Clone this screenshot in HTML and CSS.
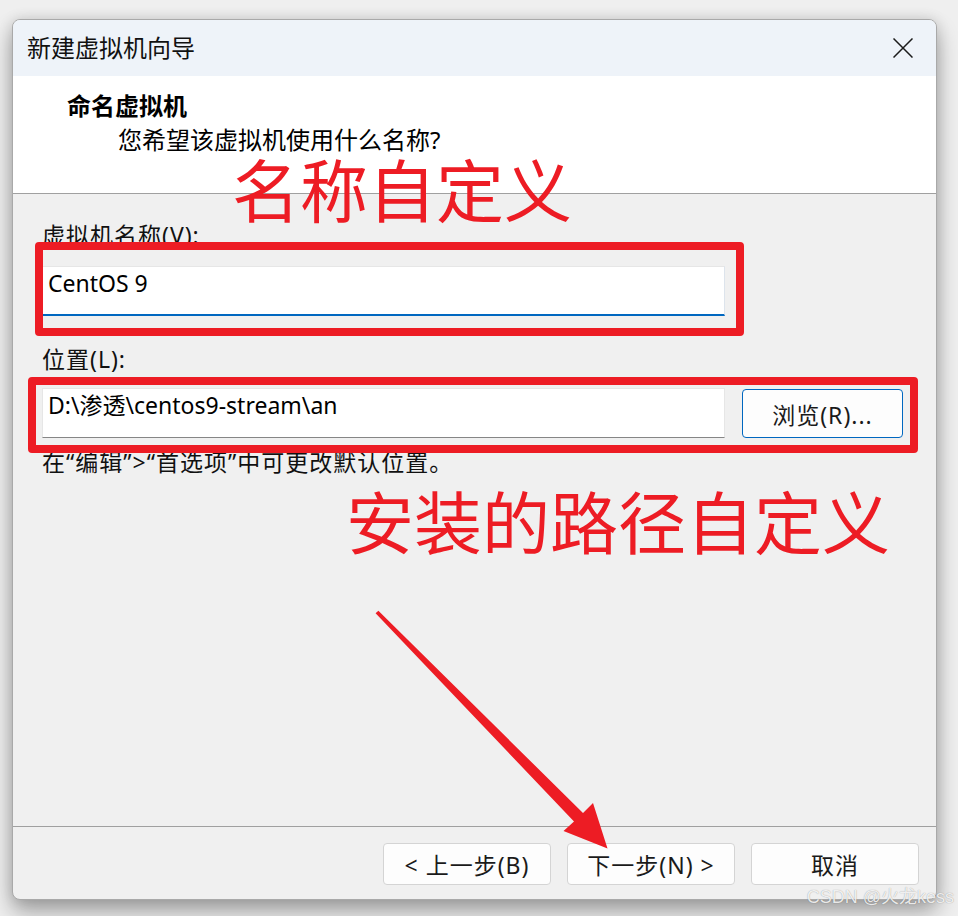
FILE: index.html
```html
<!DOCTYPE html>
<html lang="zh-CN">
<head>
    <meta charset="UTF-8">
    <meta name="viewport" content="width=device-width, initial-scale=1.0">
    <title>新建虚拟机向导</title>
    <link rel="stylesheet" href="styles.css">
</head>
<body>
    <div class="window">
        <div class="titlebar">
            <span class="title">新建虚拟机向导</span>
            <span class="close">
                <svg width="20" height="20" viewBox="0 0 20 20">
                    <path d="M0.5 0.5 L19.5 19.5 M19.5 0.5 L0.5 19.5" stroke="#1b1b1b" stroke-width="1.5" fill="none"/>
                </svg>
            </span>
        </div>

        <div class="header">
            <div class="header-title">命名虚拟机</div>
            <div class="header-sub">您希望该虚拟机使用什么名称?</div>
        </div>

        <div class="content">
            <div class="field-label">虚拟机名称(V):</div>
            <div class="text-input focused">CentOS 9</div>

            <div class="field-label loc-label">位置(L):</div>
            <div class="loc-row">
                <div class="text-input">D:\渗透\centos9-stream\an</div>
                <button class="btn browse-btn">浏览(R)...</button>
            </div>
            <div class="hint">在“编辑”&gt;“首选项”中可更改默认位置。</div>
        </div>

        <div class="footer">
            <button class="btn">&lt; 上一步(B)</button>
            <button class="btn">下一步(N) &gt;</button>
            <button class="btn">取消</button>
        </div>
    </div>

    <!-- red annotations drawn over the screenshot -->
    <div class="marks">
        <div class="mark-box box-name"></div>
        <div class="mark-box box-path"></div>
        <div class="mark-text text-name">名称自定义</div>
        <div class="mark-text text-path">安装的路径自定义</div>
        <svg class="arrow" width="958" height="916" viewBox="0 0 958 916">
            <polygon points="375.6,613.2 378.4,610.8 583,813 593,803 607.5,848.5 563.5,831 574,821.5" fill="#ed1c24"/>
        </svg>
    </div>

    <div class="watermark">CSDN @火龙kess</div>
</body>
</html>
```

FILE: styles.css
```css
body {
    margin: 0;
    padding: 0;
    position: relative;
    height: 916px;
    overflow: hidden;
    background: #efefef;
    font-family: "Noto Sans", "Noto Sans CJK SC", sans-serif;
    color: #000;
}
.window {
    position: relative;
    margin: 19px 0 0 12px;
    width: 925px;
    height: 881px;
    box-sizing: border-box;
    border: 1px solid #a9a9a9;
    border-radius: 8px;
    overflow: hidden;
    background: #f0f0f0;
    display: flex;
    flex-direction: column;
    box-shadow: 0 12px 22px rgba(0, 0, 0, 0.32), 0 0 14px rgba(0, 0, 0, 0.12);
}
.titlebar {
    height: 56px;
    flex-shrink: 0;
    background: #eef3f9;
    display: flex;
    align-items: center;
    justify-content: space-between;
    padding: 0 23px 0 14px;
}
.title {
    font-size: 24px;
    line-height: 1;
    color: #111;
}
.close {
    display: flex;
    margin-top: -1px;
}
.header {
    height: 118px;
    flex-shrink: 0;
    box-sizing: border-box;
    background: #fff;
    border-bottom: 1px solid #a0a0a0;
    padding: 15px 0 0 54px;
}
.header-title {
    font-size: 24px;
    line-height: 30px;
    font-weight: bold;
}
.header-sub {
    font-size: 24px;
    line-height: 28px;
    margin: 5px 0 0 51px;
}
.content {
    flex-grow: 1;
    padding: 27px 0 0 29px;
}
.field-label {
    font-size: 23px;
    line-height: 28px;
    letter-spacing: 1px;
    color: #111;
}
.loc-label {
    margin-top: 29px;
}
.text-input {
    margin-top: 17px;
    width: 683px;
    height: 50px;
    box-sizing: border-box;
    background: #fff;
    border: 1px solid #e6e6e6;
    border-bottom: 1px solid #868686;
    padding: 0 0 0 5px;
    font-size: 23px;
    line-height: 32px;
}
.text-input.focused {
    border-bottom: 2px solid #0067c0;
    border-right-color: #dde4ec;
}
.loc-row {
    display: flex;
    align-items: flex-start;
    gap: 17px;
    margin-top: 15px;
}
.loc-row .text-input {
    margin-top: 0;
}
.btn {
    font-family: "Noto Sans", "Noto Sans CJK SC", sans-serif;
    font-size: 23px;
    letter-spacing: 1px;
    color: #1a1a1a;
    background: #fdfdfd;
    border: 1px solid #d4d4d4;
    border-radius: 4px;
    padding: 0;
    cursor: pointer;
}
.browse-btn {
    width: 161px;
    height: 49px;
    margin-top: 1px;
    border-color: #0067c0;
}
.hint {
    margin-top: 11px;
    font-size: 23px;
    line-height: 26px;
    letter-spacing: 1px;
    color: #111;
}
.footer {
    height: 73px;
    flex-shrink: 0;
    border-top: 1px solid #a0a0a0;
    display: flex;
    justify-content: flex-end;
    align-items: flex-start;
    gap: 16px;
    padding: 16px 17px 0 0;
    box-sizing: border-box;
}
.footer .btn {
    width: 168px;
    height: 42px;
}
.marks {
    position: absolute;
    left: 0;
    top: 0;
    width: 958px;
    height: 916px;
    pointer-events: none;
}
.mark-box {
    position: absolute;
    box-sizing: border-box;
    border: 8px solid #ed1c24;
    border-radius: 4px;
}
.box-name {
    left: 35px;
    top: 242px;
    width: 709px;
    height: 94px;
}
.box-path {
    left: 28px;
    top: 377px;
    width: 890px;
    height: 76px;
}
.mark-text {
    position: absolute;
    font-family: "Noto Sans CJK SC", sans-serif;
    font-size: 68px;
    line-height: 56px;
    color: #ed1c24;
    white-space: nowrap;
}
.text-name {
    left: 232px;
    top: 160px;
}
.text-path {
    left: 346px;
    top: 492px;
}
.arrow {
    position: absolute;
    left: 0;
    top: 0;
}
.watermark {
    position: absolute;
    right: 4px;
    bottom: 8px;
    font-family: "Liberation Sans", "Noto Sans CJK SC", sans-serif;
    font-size: 18px;
    color: rgba(255, 255, 255, 0.85);
    text-shadow: 0 0 1px rgba(0, 0, 0, 0.4);
}
```
